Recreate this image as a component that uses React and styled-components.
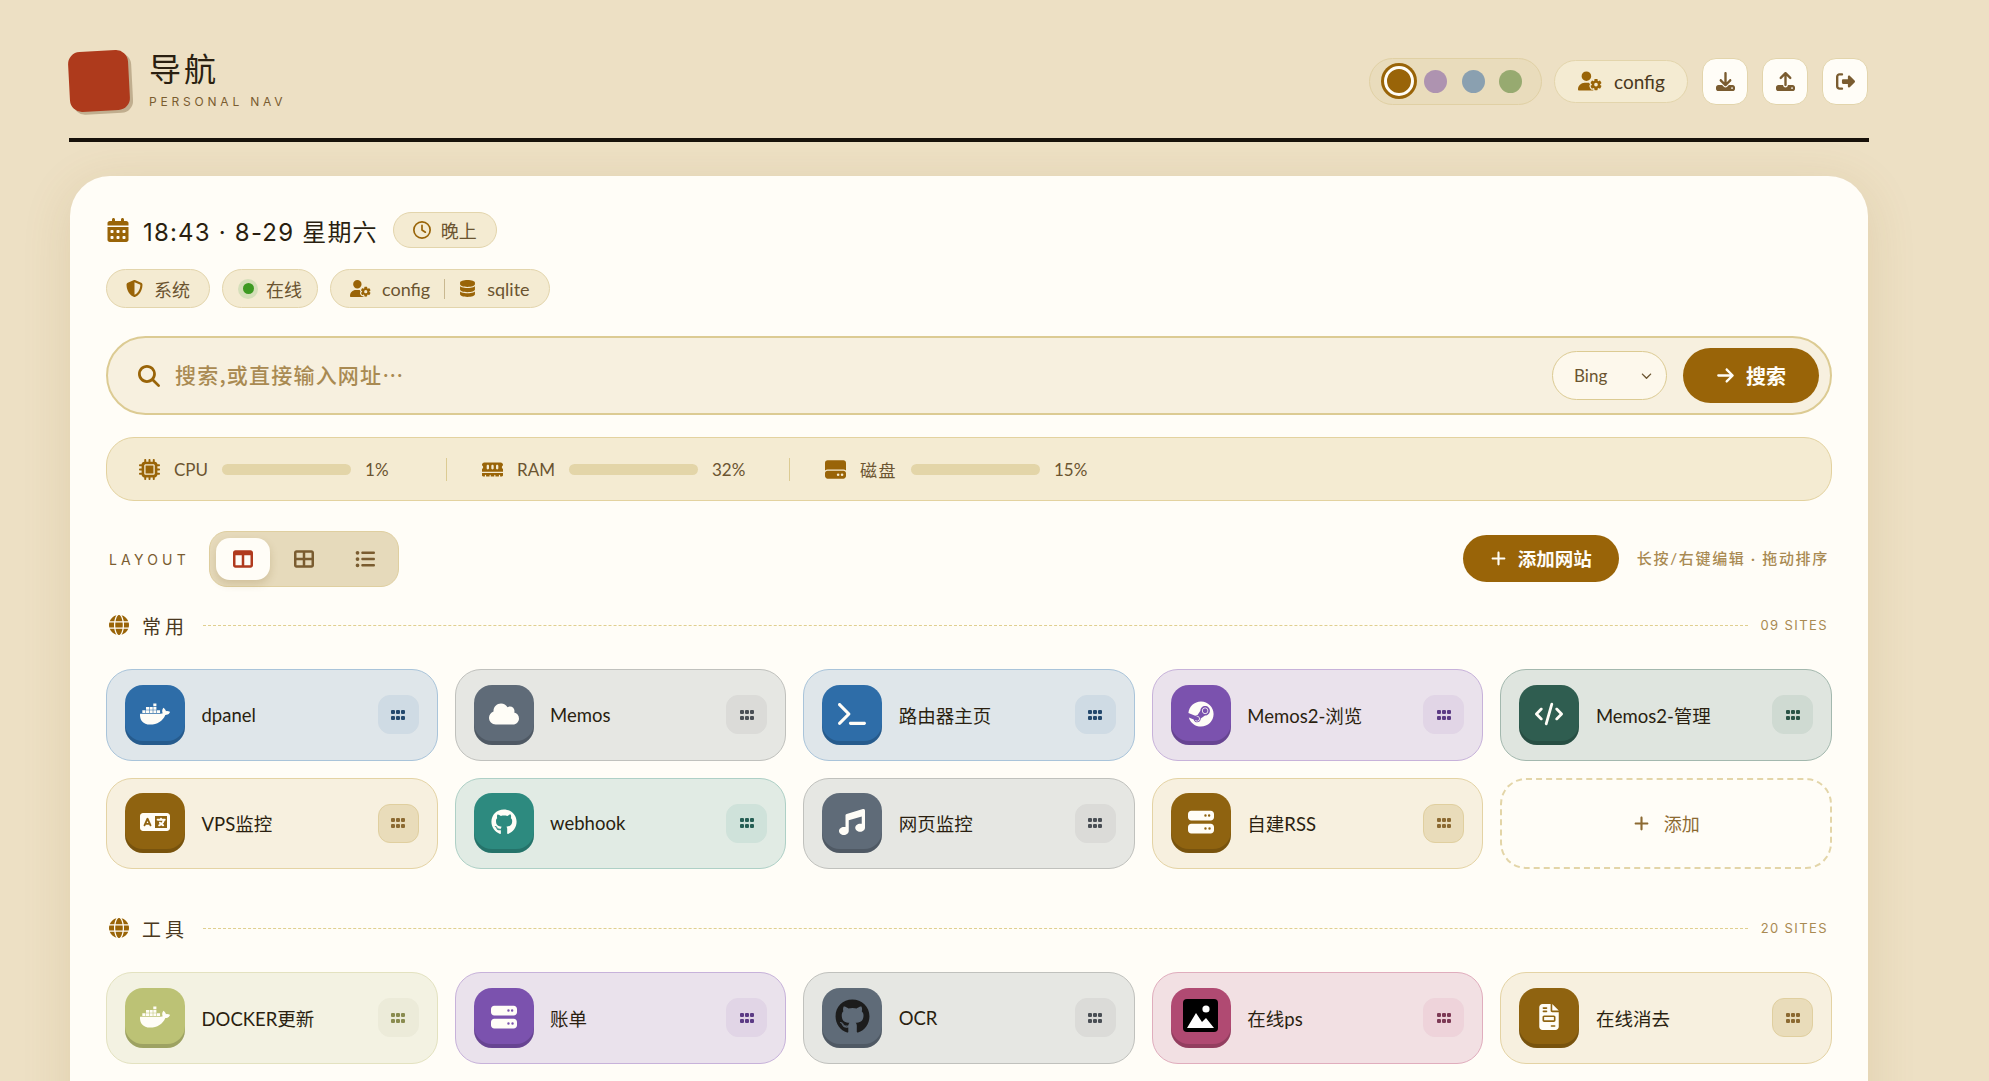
import React from 'react'
import styled, { createGlobalStyle } from 'styled-components'
import {
  FaCalendarDays, FaRegClock, FaShieldHalved, FaUserGear, FaDatabase, FaMagnifyingGlass, FaArrowRight,
  FaMicrochip, FaMemory, FaHardDrive, FaTableColumns, FaTableCellsLarge, FaListUl, FaGlobe, FaPlus, FaDocker,
  FaCloud, FaTerminal, FaSteam, FaCode, FaLanguage, FaGithub, FaMusic, FaServer, FaFileInvoice,
  FaGrip, FaDownload, FaUpload, FaRightFromBracket, FaChevronDown,
} from 'react-icons/fa6'

const FONT = `Lato, "Noto Sans CJK SC", sans-serif`
const WIDE = `Inter, "Noto Sans CJK SC", sans-serif`

const GlobalStyle = createGlobalStyle`
  html, body {
    margin: 0;
    height: 1081px;
    overflow: hidden;
    background: #ede0c4;
    font-family: ${FONT};
    color: #2a1f10;
  }
  * { box-sizing: border-box; }
`

const TONES = {
  blue: { bg: '#dfe6ea', line: '#a9c4da', icon: '#2e6da8', menu: '#cfdbe4', dots: '#24496e' },
  gray: { bg: '#e6e7e3', line: '#c0c1bd', icon: '#5f6b78', menu: '#dbdbd8', dots: '#4a4f55' },
  purple: { bg: '#eae2ec', line: '#c7b2da', icon: '#7b52ae', menu: '#e1d5e6', dots: '#5c3b85' },
  pine: { bg: '#dfe5df', line: '#a3b8ae', icon: '#2f5d50', menu: '#cfdad2', dots: '#2b5447' },
  amber: { bg: '#f7f0df', line: '#e4d3a4', icon: '#8f6310', menu: '#e9dcba', dots: '#8c6a32', edge: '#e0cf9f' },
  teal: { bg: '#e1ebe4', line: '#aed0c6', icon: '#2d8a7f', menu: '#cfe2da', dots: '#265f55' },
  olive: { bg: '#f3f2e2', line: '#e3e2c0', icon: '#bcc275', menu: '#ecebd9', dots: '#8a8c50' },
  rose: { bg: '#f2e0e3', line: '#e0adbd', icon: '#b04a72', menu: '#eed3da', dots: '#7d3a55' },
}

const Page = styled.div`
  width: 1800px;
  margin-left: 69px;
  padding-top: 50px;
`

const Header = styled.header`
  display: flex;
  align-items: center;
  justify-content: space-between;
  height: 92px;
  padding-bottom: 26px;
  border-bottom: 4px solid #17110a;
`

const Brand = styled.div`
  display: flex;
  align-items: center;
  gap: 20px;
`

const Logo = styled.div`
  width: 60px;
  height: 60px;
  background: #ae3a1c;
  border-radius: 12px;
  transform: rotate(-3deg);
  box-shadow: 3px 3px 0 rgba(90, 60, 20, 0.3);
`

const BrandText = styled.div`
  display: flex;
  flex-direction: column;
  gap: 8px;
`

const Title = styled.h1`
  margin: -3px 0 0;
  font-size: 32px;
  line-height: 36px;
  font-weight: 400;
  letter-spacing: 3px;
`

const Subtitle = styled.div`
  font-family: ${WIDE};
  font-size: 12px;
  line-height: 14px;
  letter-spacing: 3.8px;
  color: #7a5c30;
`

const Actions = styled.div`
  display: flex;
  align-items: center;
  gap: 14px;
  padding-right: 1px;
`

const Palette = styled.div`
  display: flex;
  align-items: center;
  gap: 14.5px;
  width: 173px;
  height: 47px;
  margin-right: -2px;
  padding: 0 14px;
  border-radius: 24px;
  background: #e9dcbc;
  border: 1px solid #e0d0a4;
`

const Swatch = styled.span`
  flex: none;
  width: 23px;
  height: 23px;
  border-radius: 50%;
  background: ${(p) => p.$color};
  &[data-active='true'] {
    width: 30px;
    height: 30px;
    margin-right: -4.5px;
    border: 3px solid #fffdf7;
    box-shadow: 0 0 0 3px ${(p) => p.$color};
  }
`

const UserButton = styled.div`
  display: flex;
  align-items: center;
  gap: 12px;
  height: 43px;
  width: 134px;
  padding: 0 0 0 23px;
  border-radius: 22px;
  background: #f4ebd2;
  border: 1px solid #e3d5ac;
  font-size: 19px;
  color: #4a3820;
  svg { color: #996408; flex: none; }
`

const SquareButton = styled.div`
  width: 46px;
  height: 47px;
  display: flex;
  align-items: center;
  justify-content: center;
  border-radius: 14px;
  background: #fffdf7;
  border: 1px solid #e3d5ac;
  color: #7a5c30;
  font-size: 19px;
`

const Card = styled.main`
  margin: 34px 1px 0;
  padding: 36px 36px 60px;
  min-height: 1000px;
  border-radius: 40px;
  background: #fffdf7;
  box-shadow: 0 10px 50px rgba(140, 100, 30, 0.14);
`

const DateRow = styled.div`
  display: flex;
  align-items: center;
  height: 36px;
  svg.cal { color: #996408; font-size: 24px; margin-right: 13px; }
`

const DateText = styled.span`
  font-family: ${WIDE};
  font-size: 24px;
  letter-spacing: 1.2px;
  margin-right: 15px;
`

const Pill = styled.div`
  display: flex;
  align-items: center;
  height: ${(p) => p.$h || 39}px;
  padding: 0 ${(p) => p.$pad || 19}px;
  gap: ${(p) => p.$gap || 11}px;
  border-radius: 20px;
  background: #f4ebd2;
  border: 1px solid #e3d5ac;
  font-size: 18px;
  color: #6b5430;
  svg { color: #996408; font-size: 17px; flex: none; }
`

const PillRow = styled.div`
  display: flex;
  gap: 12px;
  margin-top: 21px;
`

const Led = styled.span`
  width: 20px;
  height: 20px;
  border-radius: 50%;
  background: #d5dfb9;
  display: flex;
  align-items: center;
  justify-content: center;
  margin-right: -3px;
  &::after {
    content: '';
    width: 11px;
    height: 11px;
    border-radius: 50%;
    background: #3d9a22;
  }
`

const Sep = styled.span`
  width: 1px;
  height: 20px;
  background: #c9b890;
  margin: 0 3px;
`

const SearchBar = styled.div`
  display: flex;
  align-items: center;
  height: 79px;
  margin-top: 28px;
  padding: 0 11px 0 30px;
  border: 2px solid #dccb93;
  border-radius: 40px;
  background: #f7f0df;
  > svg { color: #996408; font-size: 22px; flex: none; }
`

const SearchInput = styled.input`
  flex: 1;
  height: 100%;
  margin-left: 15px;
  padding: 0 0 4px;
  border: none;
  outline: none;
  background: transparent;
  font-family: "Noto Sans CJK SC", sans-serif;
  font-size: 21px;
  font-weight: 500;
  letter-spacing: 1.2px;
  &::placeholder { color: #a98a52; opacity: 1; }
`

const EngineSelect = styled.div`
  display: flex;
  align-items: center;
  justify-content: space-between;
  width: 115px;
  height: 49px;
  padding: 0 14px 0 21px;
  border-radius: 25px;
  border: 1px solid #dccb93;
  background: #fdf8ec;
  font-size: 17px;
  color: #6b5430;
  svg { font-size: 11px; color: #6b5430; }
`

const SearchButton = styled.div`
  display: flex;
  align-items: center;
  justify-content: center;
  gap: 11px;
  width: 136px;
  height: 55px;
  margin-left: 16px;
  border-radius: 28px;
  background: #996408;
  color: #fffdf7;
  font-size: 20px;
  font-weight: 600;
  svg { font-size: 19px; }
`

const Stats = styled.div`
  display: flex;
  align-items: center;
  height: 64px;
  margin-top: 22px;
  padding-left: 32px;
  border-radius: 28px;
  background: #f4ebd2;
  border: 1px solid #e3d29f;
`

const Stat = styled.div`
  display: flex;
  align-items: center;
  gap: 14px;
  width: 307px;
  font-size: 17px;
  color: #6b5430;
  svg { color: #996408; font-size: 21px; flex: none; }
`

const StatLabel = styled.span`
  letter-spacing: ${(p) => p.$spacing || 0}px;
`

const Bar = styled.div`
  width: 129px;
  height: 11px;
  border-radius: 6px;
  background: #e3d5a8;
`

const StatSep = styled.span`
  width: 1px;
  height: 23px;
  background: #dccb93;
  margin-right: 35px;
`

const Toolbar = styled.div`
  display: flex;
  align-items: center;
  height: 56px;
  margin-top: 30px;
`

const LayoutLabel = styled.span`
  margin-left: 3px;
  font-family: ${WIDE};
  font-size: 14px;
  letter-spacing: 4.2px;
  color: #7a5c30;
`

const LayoutToggle = styled.div`
  display: flex;
  gap: 7px;
  margin-left: 19px;
  padding: 6px;
  border-radius: 18px;
  background: #e6dabb;
  border: 1px solid #dfcfa0;
`

const LayoutButton = styled.div`
  width: 54px;
  height: 42px;
  display: flex;
  align-items: center;
  justify-content: center;
  border-radius: 14px;
  font-size: 20px;
  color: #7a5c30;
  &[data-active='true'] {
    background: #fffdf7;
    color: #b03a1e;
    box-shadow: 0 4px 8px rgba(120, 90, 30, 0.2);
  }
`

const AddButton = styled.div`
  display: flex;
  align-items: center;
  justify-content: center;
  gap: 11px;
  width: 156px;
  height: 47px;
  margin: -2px 0 0 auto;
  border-radius: 24px;
  background: #996408;
  color: #fffdf7;
  font-size: 18.5px;
  font-weight: 600;
  svg { font-size: 17px; }
`

const Hint = styled.span`
  margin: -3px 3px 0 18px;
  font-size: 15px;
  font-weight: 500;
  letter-spacing: 1.7px;
  color: #a98a52;
`

const Section = styled.section`
  margin-top: ${(p) => p.$top}px;
`

const SectionHead = styled.div`
  display: flex;
  align-items: center;
  height: 24px;
  margin-bottom: 32px;
  padding: 0 4px 0 3px;
  svg { color: #996408; font-size: 20px; flex: none; }
`

const SectionName = styled.h2`
  margin: 0 0 0 13px;
  font-size: 19px;
  font-weight: 400;
  letter-spacing: 4px;
  color: #4a3820;
`

const SectionLine = styled.span`
  flex: 1;
  margin: 0 13px 0 15px;
  border-top: 1px dashed #e0cf8f;
`

const SectionCount = styled.span`
  font-family: ${WIDE};
  font-size: 13px;
  letter-spacing: 1.4px;
  color: #a98a52;
`

const Grid = styled.div`
  display: grid;
  grid-template-columns: repeat(5, 1fr);
  grid-auto-rows: 91.5px;
  gap: 17px;
`

const Site = styled.div`
  display: flex;
  align-items: center;
  padding: 0 18px;
  border-radius: 26px;
  background: ${(p) => TONES[p.$tone].bg};
  border: 1px solid ${(p) => TONES[p.$tone].line};
`

const SiteIcon = styled.div`
  flex: none;
  width: 60px;
  height: 60px;
  display: flex;
  align-items: center;
  justify-content: center;
  padding-bottom: 2px;
  border-radius: 18px;
  background: ${(p) => TONES[p.$tone].icon};
  box-shadow: inset 0 -4px 0 rgba(0, 0, 0, 0.16);
  color: ${(p) => p.$ink || '#fffdf7'};
  font-size: ${(p) => p.$size || 26}px;
`

const SiteName = styled.span`
  flex: 1;
  margin-left: 16.5px;
  font-size: 18.5px;
`

const Grip = styled.div`
  flex: none;
  width: 41px;
  height: 39px;
  display: flex;
  align-items: center;
  justify-content: center;
  border-radius: 12px;
  background: ${(p) => TONES[p.$tone].menu};
  border: 1px solid ${(p) => TONES[p.$tone].edge || TONES[p.$tone].menu};
  color: ${(p) => TONES[p.$tone].dots};
  font-size: 16px;
`

const AddTile = styled.div`
  display: flex;
  align-items: center;
  justify-content: center;
  gap: 14px;
  border-radius: 26px;
  border: 2px dashed #e3d5a8;
  color: #8c6a32;
  font-size: 18px;
  svg { font-size: 17px; }
`

const PhotoIcon = () => (
  <svg width="35" height="35" viewBox="0 0 35 35">
    <rect width="35" height="33" rx="4" fill="#000" />
    <circle cx="23" cy="10" r="3.6" fill="#fff" />
    <path d="M4 29 L13 14 L19 23 L23 19 L31 29 Z" fill="#fff" />
  </svg>
)

const COMMON = [
  { name: 'dpanel', tone: 'blue', icon: <FaDocker />, size: 30 },
  { name: 'Memos', tone: 'gray', icon: <FaCloud />, size: 30 },
  { name: '路由器主页', tone: 'blue', icon: <FaTerminal />, size: 28 },
  { name: 'Memos2-浏览', tone: 'purple', icon: <FaSteam /> },
  { name: 'Memos2-管理', tone: 'pine', icon: <FaCode />, size: 28 },
  { name: 'VPS监控', tone: 'amber', icon: <FaLanguage />, size: 30 },
  { name: 'webhook', tone: 'teal', icon: <FaGithub /> },
  { name: '网页监控', tone: 'gray', icon: <FaMusic /> },
  { name: '自建RSS', tone: 'amber', icon: <FaServer /> },
]

const TOOLS = [
  { name: 'DOCKER更新', tone: 'olive', icon: <FaDocker />, size: 30 },
  { name: '账单', tone: 'purple', icon: <FaServer /> },
  { name: 'OCR', tone: 'gray', icon: <FaGithub />, size: 35, ink: '#1c1c1c' },
  { name: '在线ps', tone: 'rose', icon: <PhotoIcon /> },
  { name: '在线消去', tone: 'amber', icon: <FaFileInvoice /> },
]

const SiteCard = ({ site }) => (
  <Site $tone={site.tone}>
    <SiteIcon $tone={site.tone} $size={site.size} $ink={site.ink}>{site.icon}</SiteIcon>
    <SiteName>{site.name}</SiteName>
    <Grip $tone={site.tone}><FaGrip /></Grip>
  </Site>
)

const App = () => (
  <Page>
    <GlobalStyle />
    <Header>
      <Brand>
        <Logo />
        <BrandText>
          <Title>导航</Title>
          <Subtitle>PERSONAL NAV</Subtitle>
        </BrandText>
      </Brand>
      <Actions>
        <Palette>
          <Swatch $color="#996408" data-active="true" />
          <Swatch $color="#ae93b0" />
          <Swatch $color="#8aa0b0" />
          <Swatch $color="#97aa70" />
        </Palette>
        <UserButton><FaUserGear size={24} />config</UserButton>
        <SquareButton><FaDownload /></SquareButton>
        <SquareButton><FaUpload /></SquareButton>
        <SquareButton><FaRightFromBracket /></SquareButton>
      </Actions>
    </Header>

    <Card>
      <DateRow>
        <FaCalendarDays className="cal" />
        <DateText>18:43 · 8-29 星期六</DateText>
        <Pill $h={36} $pad={19} $gap={10}><FaRegClock size={18} />晚上</Pill>
      </DateRow>
      <PillRow>
        <Pill><FaShieldHalved />系统</Pill>
        <Pill $pad={15}><Led />在线</Pill>
        <Pill><FaUserGear size={21} />config<Sep /><FaDatabase />sqlite</Pill>
      </PillRow>

      <SearchBar>
        <FaMagnifyingGlass />
        <SearchInput placeholder="搜索,或直接输入网址…" />
        <EngineSelect>Bing<FaChevronDown /></EngineSelect>
        <SearchButton><FaArrowRight />搜索</SearchButton>
      </SearchBar>

      <Stats>
        <Stat><FaMicrochip /><StatLabel>CPU</StatLabel><Bar />1%</Stat>
        <StatSep />
        <Stat><FaMemory /><StatLabel>RAM</StatLabel><Bar />32%</Stat>
        <StatSep />
        <Stat><FaHardDrive /><StatLabel $spacing={1.5}>磁盘</StatLabel><Bar />15%</Stat>
      </Stats>

      <Toolbar>
        <LayoutLabel>LAYOUT</LayoutLabel>
        <LayoutToggle>
          <LayoutButton data-active="true"><FaTableColumns /></LayoutButton>
          <LayoutButton><FaTableCellsLarge /></LayoutButton>
          <LayoutButton><FaListUl /></LayoutButton>
        </LayoutToggle>
        <AddButton><FaPlus />添加网站</AddButton>
        <Hint>长按/右键编辑 · 拖动排序</Hint>
      </Toolbar>

      <Section $top={26}>
        <SectionHead>
          <FaGlobe />
          <SectionName>常用</SectionName>
          <SectionLine />
          <SectionCount>09 SITES</SectionCount>
        </SectionHead>
        <Grid>
          {COMMON.map((site) => <SiteCard key={site.name} site={site} />)}
          <AddTile><FaPlus />添加</AddTile>
        </Grid>
      </Section>

      <Section $top={47}>
        <SectionHead>
          <FaGlobe />
          <SectionName>工具</SectionName>
          <SectionLine />
          <SectionCount>20 SITES</SectionCount>
        </SectionHead>
        <Grid>
          {TOOLS.map((site) => <SiteCard key={site.name} site={site} />)}
        </Grid>
      </Section>
    </Card>
  </Page>
)

export default App
